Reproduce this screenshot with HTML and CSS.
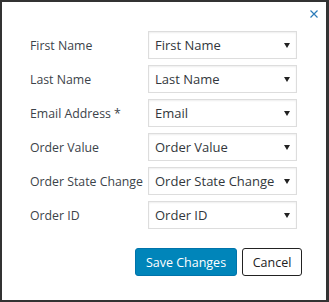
FILE: index.html
```html
<!DOCTYPE html>
<html lang="en">
<head>
  <meta charset="UTF-8">
  <meta name="viewport" content="width=device-width, initial-scale=1.0">
  <title>Field Mapping</title>
  <link rel="stylesheet" href="styles.css">
</head>
<body>
  <div class="dialog">
    <button class="close-btn" aria-label="Close">
      <svg width="8" height="8" viewBox="0 0 8 8"><path d="M0.5 0.5 L7.5 7.5 M7.5 0.5 L0.5 7.5" stroke="#2b7bb9" stroke-width="1.2" fill="none"/></svg>
    </button>
    <form class="mapping-form">
      <div class="form-row">
        <label for="first_name">First Name</label>
        <div class="select-wrap">
          <select id="first_name"><option>First Name</option></select>
        </div>
      </div>
      <div class="form-row">
        <label for="last_name">Last Name</label>
        <div class="select-wrap">
          <select id="last_name"><option>Last Name</option></select>
        </div>
      </div>
      <div class="form-row">
        <label for="email">Email Address *</label>
        <div class="select-wrap">
          <select id="email"><option>Email</option></select>
        </div>
      </div>
      <div class="form-row">
        <label for="order_value">Order Value</label>
        <div class="select-wrap">
          <select id="order_value"><option>Order Value</option></select>
        </div>
      </div>
      <div class="form-row">
        <label for="order_state">Order State Change</label>
        <div class="select-wrap">
          <select id="order_state"><option>Order State Change</option></select>
        </div>
      </div>
      <div class="form-row">
        <label for="order_id">Order ID</label>
        <div class="select-wrap">
          <select id="order_id"><option>Order ID</option></select>
        </div>
      </div>
      <div class="actions">
        <button type="button" class="btn btn-primary">Save Changes</button>
        <button type="button" class="btn btn-default">Cancel</button>
      </div>
    </form>
  </div>
</body>
</html>
```
FILE: styles.css
```css
html, body {
  height: 100%;
}

body {
  font-family: 'Open Sans', 'Noto Sans', sans-serif;
  background-color: #333;
  margin: 0;
  padding: 2px 3px 2px 2px;
  box-sizing: border-box;
}

.dialog {
  position: relative;
  height: 100%;
  background-color: #fff;
  padding: 29px 24px 0 28px;
  box-sizing: border-box;
}

.close-btn {
  position: absolute;
  top: 7px;
  right: 7px;
  width: 10px;
  height: 10px;
  padding: 1px;
  border: none;
  background: none;
  cursor: pointer;
  display: flex;
}

.mapping-form {
  display: flex;
  flex-direction: column;
  gap: 6px;
}

.form-row {
  display: flex;
  align-items: center;
  height: 28px;
}

.form-row label {
  width: 118px;
  font-size: 12.3px;
  color: #3c434a;
  white-space: nowrap;
}

.select-wrap {
  position: relative;
  width: 149px;
  height: 28px;
}

.select-wrap::after {
  content: "";
  position: absolute;
  right: 7px;
  top: 12px;
  border-left: 3px solid transparent;
  border-right: 3px solid transparent;
  border-top: 5px solid #222;
  pointer-events: none;
}

.select-wrap select {
  appearance: none;
  -webkit-appearance: none;
  width: 100%;
  height: 100%;
  margin: 0;
  padding: 0 18px 0 6px;
  border: 1px solid #ddd;
  border-radius: 0;
  box-shadow: inset 0 1px 2px rgba(0, 0, 0, 0.07);
  background-color: #fff;
  font-family: inherit;
  font-size: 13px;
  color: #32373c;
}

.actions {
  display: flex;
  justify-content: flex-end;
  gap: 5px;
  margin-top: 13px;
}

.btn {
  height: 28px;
  padding: 0;
  border-radius: 3px;
  font-family: inherit;
  font-size: 12.5px;
  white-space: nowrap;
  cursor: pointer;
}

.btn-primary {
  width: 102px;
  background-color: #0085ba;
  border: 1px solid #0073aa;
  color: #fff;
}

.btn-default {
  width: 60px;
  background-color: #fff;
  border: 1px solid #222;
  color: #222;
}
```
